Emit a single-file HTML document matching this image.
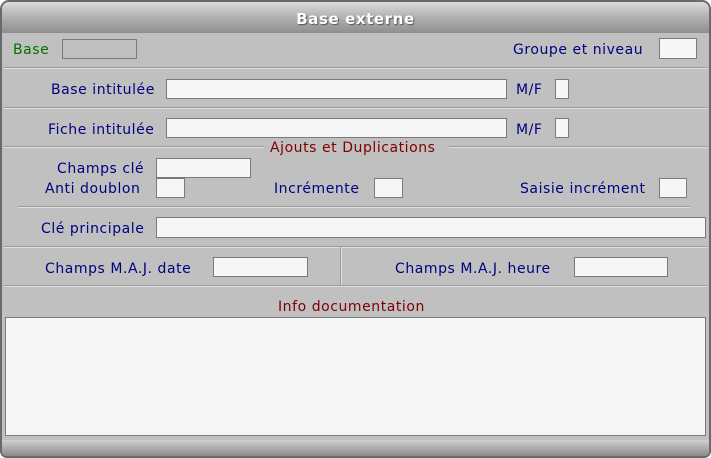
<!DOCTYPE html>
<html><head><meta charset="utf-8"><style>
*{margin:0;padding:0;box-sizing:border-box}
body{width:711px;height:458px;background:#fff;position:relative;overflow:hidden;font-family:"DejaVu Sans","Liberation Sans",sans-serif;font-size:14px;letter-spacing:0.55px}
#win{position:absolute;left:0;top:0;width:711px;height:458px;background:#c0c0c0;border:2px solid #6a6a6a;border-radius:9px 9px 7px 7px;overflow:hidden}
#title{position:absolute;left:0;top:0;width:100%;height:31px;background:linear-gradient(#dcdcdc,#b8b8b8 40%,#8e8e8e);color:#fff;font-weight:bold;font-size:15px;letter-spacing:0.6px;text-align:center;line-height:34px;text-shadow:1px 1px 1px #555}
.l{position:absolute;color:#000080;white-space:nowrap;line-height:16px;margin-top:2px}
.r{color:#800000}
.i{position:absolute;background:#f6f6f6;border:1px solid #7a7a7a}
.h{position:absolute;height:2px;border-top:1px solid #9a9a9a;border-bottom:1px solid #e0e0e0}
</style></head><body>
<div id="win">
<div id="title">Base externe</div>
</div>
<div class="l" style="left:13px;top:40px;color:#007000">Base</div>
<div class="i" style="left:62px;top:39px;width:75px;height:20px;background:#c0c0c0"></div>
<div class="l" style="left:513px;top:40px">Groupe et niveau</div>
<div class="i" style="left:659px;top:38px;width:38px;height:21px"></div>
<div class="h" style="left:4px;top:67px;width:703px"></div>
<div class="l" style="left:51px;top:80px">Base intitulée</div>
<div class="i" style="left:166px;top:79px;width:341px;height:20px"></div>
<div class="l" style="left:516px;top:80px">M/F</div>
<div class="i" style="left:555px;top:79px;width:14px;height:20px"></div>
<div class="h" style="left:4px;top:107px;width:703px"></div>
<div class="l" style="left:48px;top:120px">Fiche intitulée</div>
<div class="i" style="left:166px;top:118px;width:341px;height:20px"></div>
<div class="l" style="left:516px;top:120px">M/F</div>
<div class="i" style="left:555px;top:118px;width:14px;height:20px"></div>
<div class="h" style="left:4px;top:146px;width:260px"></div>
<div class="l r" style="left:270px;top:138px">Ajouts et Duplications</div>
<div class="h" style="left:449px;top:146px;width:258px"></div>
<div class="l" style="left:57px;top:159px">Champs clé</div>
<div class="i" style="left:156px;top:158px;width:95px;height:20px"></div>
<div class="l" style="left:45px;top:179px">Anti doublon</div>
<div class="i" style="left:156px;top:178px;width:29px;height:20px"></div>
<div class="l" style="left:274px;top:179px">Incrémente</div>
<div class="i" style="left:374px;top:178px;width:29px;height:20px"></div>
<div class="l" style="left:520px;top:179px">Saisie incrément</div>
<div class="i" style="left:659px;top:178px;width:28px;height:20px"></div>
<div class="h" style="left:18px;top:206px;width:672px"></div>
<div class="l" style="left:41px;top:219px">Clé principale</div>
<div class="i" style="left:156px;top:217px;width:550px;height:21px"></div>
<div class="h" style="left:4px;top:246px;width:703px"></div>
<div style="position:absolute;left:340px;top:247px;width:2px;height:39px;border-left:1px solid #9a9a9a;border-right:1px solid #e0e0e0"></div>
<div class="l" style="left:45px;top:259px">Champs M.A.J. date</div>
<div class="i" style="left:213px;top:257px;width:95px;height:20px"></div>
<div class="l" style="left:395px;top:259px">Champs M.A.J. heure</div>
<div class="i" style="left:574px;top:257px;width:94px;height:20px"></div>
<div class="h" style="left:4px;top:285px;width:703px"></div>
<div class="l r" style="left:278px;top:297px">Info documentation</div>
<div class="i" style="left:5px;top:317px;width:701px;height:119px"></div>
<div style="position:absolute;left:2px;bottom:2px;width:707px;height:16px;background:linear-gradient(#d0d0d0,#8a8a8a);border-radius:0 0 6px 6px"></div>
</body></html>
